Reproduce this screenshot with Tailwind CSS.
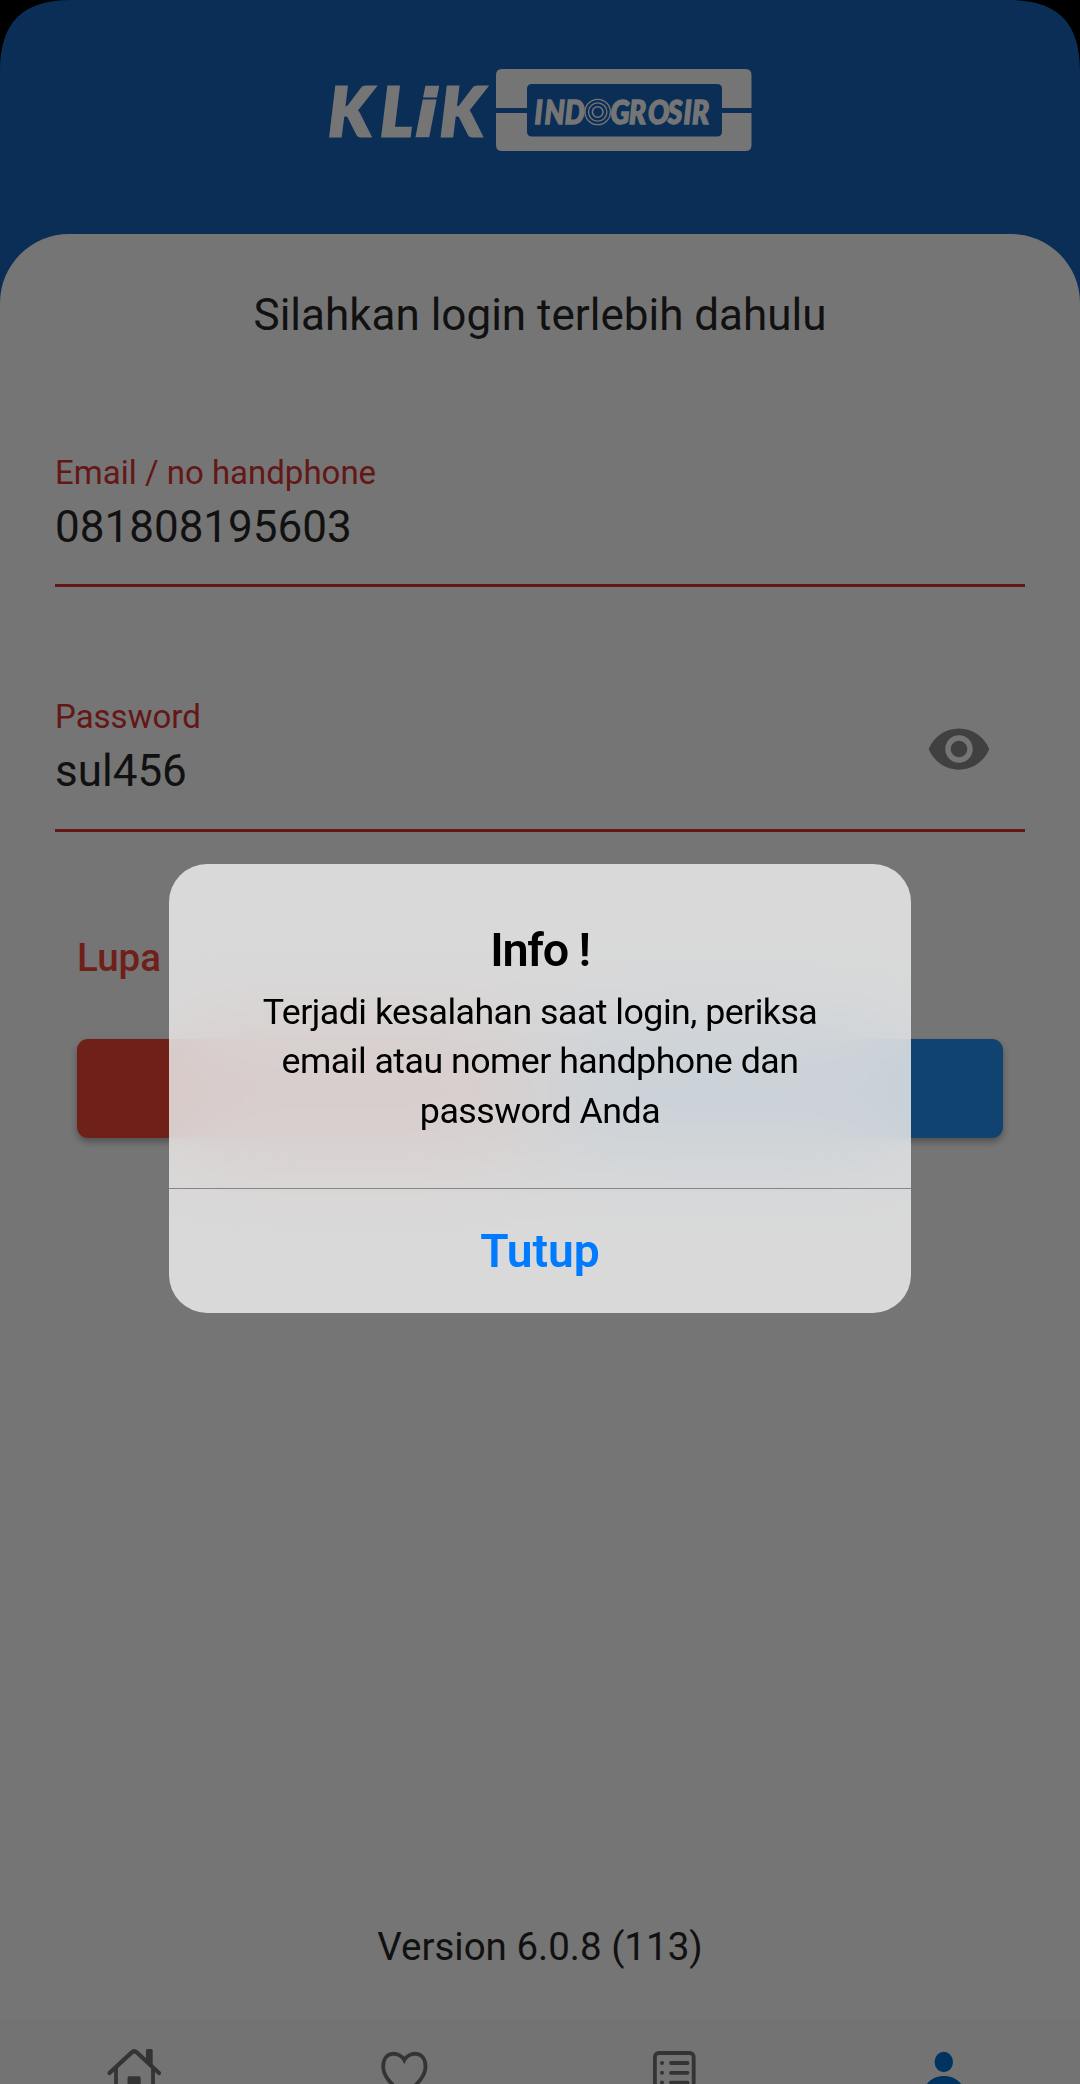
<!DOCTYPE html>
<html lang="id">
<head>
<meta charset="utf-8">
<title>Klik Indogrosir</title>
<script src="https://cdn.jsdelivr.net/npm/@tailwindcss/browser@4"></script>
</head>
<body class="bg-[#757575] font-['Roboto',sans-serif] text-[#111111]">
<div class="relative flex h-[2084px] w-[1080px] flex-col overflow-hidden bg-[#757575]">

  <!-- Header with brand -->
  <header class="h-[310px] shrink-0 bg-[#0b2e57]">
    <svg class="block" width="1080" height="234" viewBox="0 0 1080 234" fill="#757575">
      <path fill="#000" d="M0 0H72C22 0 0 22 0 72ZM1080 0H1008C1058 0 1080 22 1080 72Z"/>
      <g font-family="Lato" font-weight="900" font-style="italic" stroke="#757575">
        <text y="135.500" font-size="66.500" stroke-width="3"><tspan x="328.500">K</tspan><tspan x="380.500">L</tspan><tspan x="415" font-family="DejaVu Sans" font-weight="700" font-size="64" stroke-width="2.500">i</tspan><tspan x="440">K</tspan></text>
        <text transform="translate(534.500 123.500) scale(.88 1)" x="0 11.400 34.500" font-size="32" stroke-width="1.500">IND</text>
        <text transform="translate(610.500 123.500) scale(.88 1)" x="0 21 42.500 65 83 92.500" font-size="32" stroke-width="1.500">GROSIR</text>
      </g>
      <path fill-rule="evenodd" d="M502 69H745.500Q751.500 69 751.500 75V108H722V89Q722 84 717 84H532Q527 84 527 89V108H496V75Q496 69 502 69Z"/>
      <path d="M496 113H527V131.500Q527 136.500 532 136.500H717Q722 136.500 722 131.500V113H751.500V145Q751.500 151 745.500 151H502Q496 151 496 145Z"/>
      <g fill="none" stroke="#757575" stroke-width="1.300">
        <circle cx="597.700" cy="112" r="12.700"/><circle cx="597.700" cy="112" r="9.200"/><circle cx="597.700" cy="112" r="5.300" stroke-width="1.600"/>
      </g>
    </svg>
  </header>

  <!-- Login sheet -->
  <main class="-mt-[76.500px] flex grow flex-col rounded-t-[69px] bg-[#757575] pt-[51px]">
    <h1 class="text-center text-[44px] leading-[60px]">Silahkan login terlebih dahulu</h1>

    <form class="mt-[107.500px] flex flex-col px-[55px]">
      <div class="flex h-[135px] flex-col border-b-[3px] border-[#631716]">
        <label class="pt-px text-[33px] leading-[40px] text-[#631716]">Email / no handphone</label>
        <div class="mt-[5.500px] text-[44px] leading-[56px]">081808195603</div>
      </div>
      <div class="mt-[109.500px] flex h-[135px] justify-between border-b-[3px] border-[#631716]">
        <div class="flex flex-col">
          <label class="text-[33px] leading-[40px] text-[#631716]">Password</label>
          <div class="mt-[6.500px] text-[44px] leading-[56px]">sul456</div>
        </div>
        <svg class="mt-[19.500px] mr-[33px]" width="66" height="66" viewBox="0 0 24 24" fill="#404040"><path d="M12 4.500C7 4.500 2.730 7.610 1 12c1.730 4.390 6 7.500 11 7.500s9.270-3.110 11-7.500c-1.730-4.390-6-7.500-11-7.500zM12 17c-2.760 0-5-2.240-5-5s2.240-5 5-5 5 2.240 5 5-2.240 5-5 5zm0-8c-1.660 0-3 1.340-3 3s1.340 3 3 3 3-1.340 3-3-1.340-3-3-3z"/></svg>
      </div>
    </form>

    <div class="mt-[103px] px-[77px]">
      <div class="text-[38.500px] leading-[46px] font-medium text-[#6f2019]">Lupa</div>
      <div class="mt-[58.500px] flex gap-[22px]">
        <div class="h-[99px] grow rounded-[11px] bg-[#6f2019] shadow-[0_4px_7px_rgba(0,0,0,0.300)]"></div>
        <div class="h-[99px] grow rounded-[11px] bg-[#10436f] shadow-[0_4px_7px_rgba(0,0,0,0.300)]"></div>
      </div>
    </div>

    <p class="mt-auto mb-[51px] text-center text-[38.500px] leading-[50px]">Version 6.0.8 (113)</p>

    <!-- Bottom navigation -->
    <nav class="h-[61px] shrink-0 bg-[#737373] shadow-[0_-1px_4px_rgba(0,0,0,0.060)]">
      <svg class="block" width="1080" height="61" viewBox="0 2023 1080 61" fill="#343434">
        <path d="M109.500 2073 131.500 2052.600Q134.200 2050 136.900 2052.600L159 2073" fill="none" stroke="#343434" stroke-width="4.200" stroke-linecap="round"/>
        <path d="M116 2067V2084M153 2067V2084" fill="none" stroke="#343434" stroke-width="3.800"/>
        <path d="M147.500 2049H151.300Q152.700 2049 152.700 2050.500V2067L146 2061V2050.500Q146 2049 147.500 2049ZM129 2076.300H139Q140.700 2076.300 140.700 2078V2084H127.500V2078Q127.500 2076.300 129 2076.300Z"/>
        <path d="M404.300 2060C400 2051.500 383.200 2050 383.200 2066.500C383.200 2077 392 2084.500 404.300 2096C416.600 2084.500 425.500 2077 425.500 2066.500C425.500 2050 408.600 2051.500 404.300 2060Z" fill="none" stroke="#343434" stroke-width="3.800"/>
        <rect x="654.900" y="2053" width="38.800" height="48" rx="4" fill="none" stroke="#343434" stroke-width="3.800"/>
        <circle cx="662" cy="2063" r="2"/><circle cx="662" cy="2072.800" r="2"/><circle cx="662" cy="2082.600" r="2"/>
        <path d="M671 2063H687.500M671 2072.800H687.500M671 2082.600H687.500" stroke="#343434" stroke-width="3.800" stroke-linecap="round"/>
        <g fill="#00335f"><ellipse cx="943.800" cy="2062" rx="9.200" ry="10.200"/><path d="M926 2085C931 2078.500 937 2076 943.800 2076S957 2078.500 962 2085Z"/></g>
      </svg>
    </nav>
  </main>

  <!-- Alert dialog -->
  <div class="absolute top-[864px] left-[169px] flex h-[449px] w-[742px] flex-col overflow-hidden rounded-[38px] bg-[#f2f2f2]/80 text-center text-black backdrop-blur-[55px]">
    <div class="h-[324px] pt-[58px]">
      <h2 class="text-[46.750px] leading-[56px] font-semibold tracking-[-1.200px]">Info !</h2>
      <p class="mt-[9.900px] text-[35.750px] leading-[49.400px] tracking-[-0.530px]">Terjadi kesalahan saat login, periksa<br>email atau nomer handphone dan<br>password Anda</p>
    </div>
    <div class="h-px shrink-0 bg-black/38"></div>
    <div class="pt-[30px] text-[46.200px] leading-[64px] font-semibold text-[#007aff]">Tutup</div>
  </div>
</div>
</body>
</html>
